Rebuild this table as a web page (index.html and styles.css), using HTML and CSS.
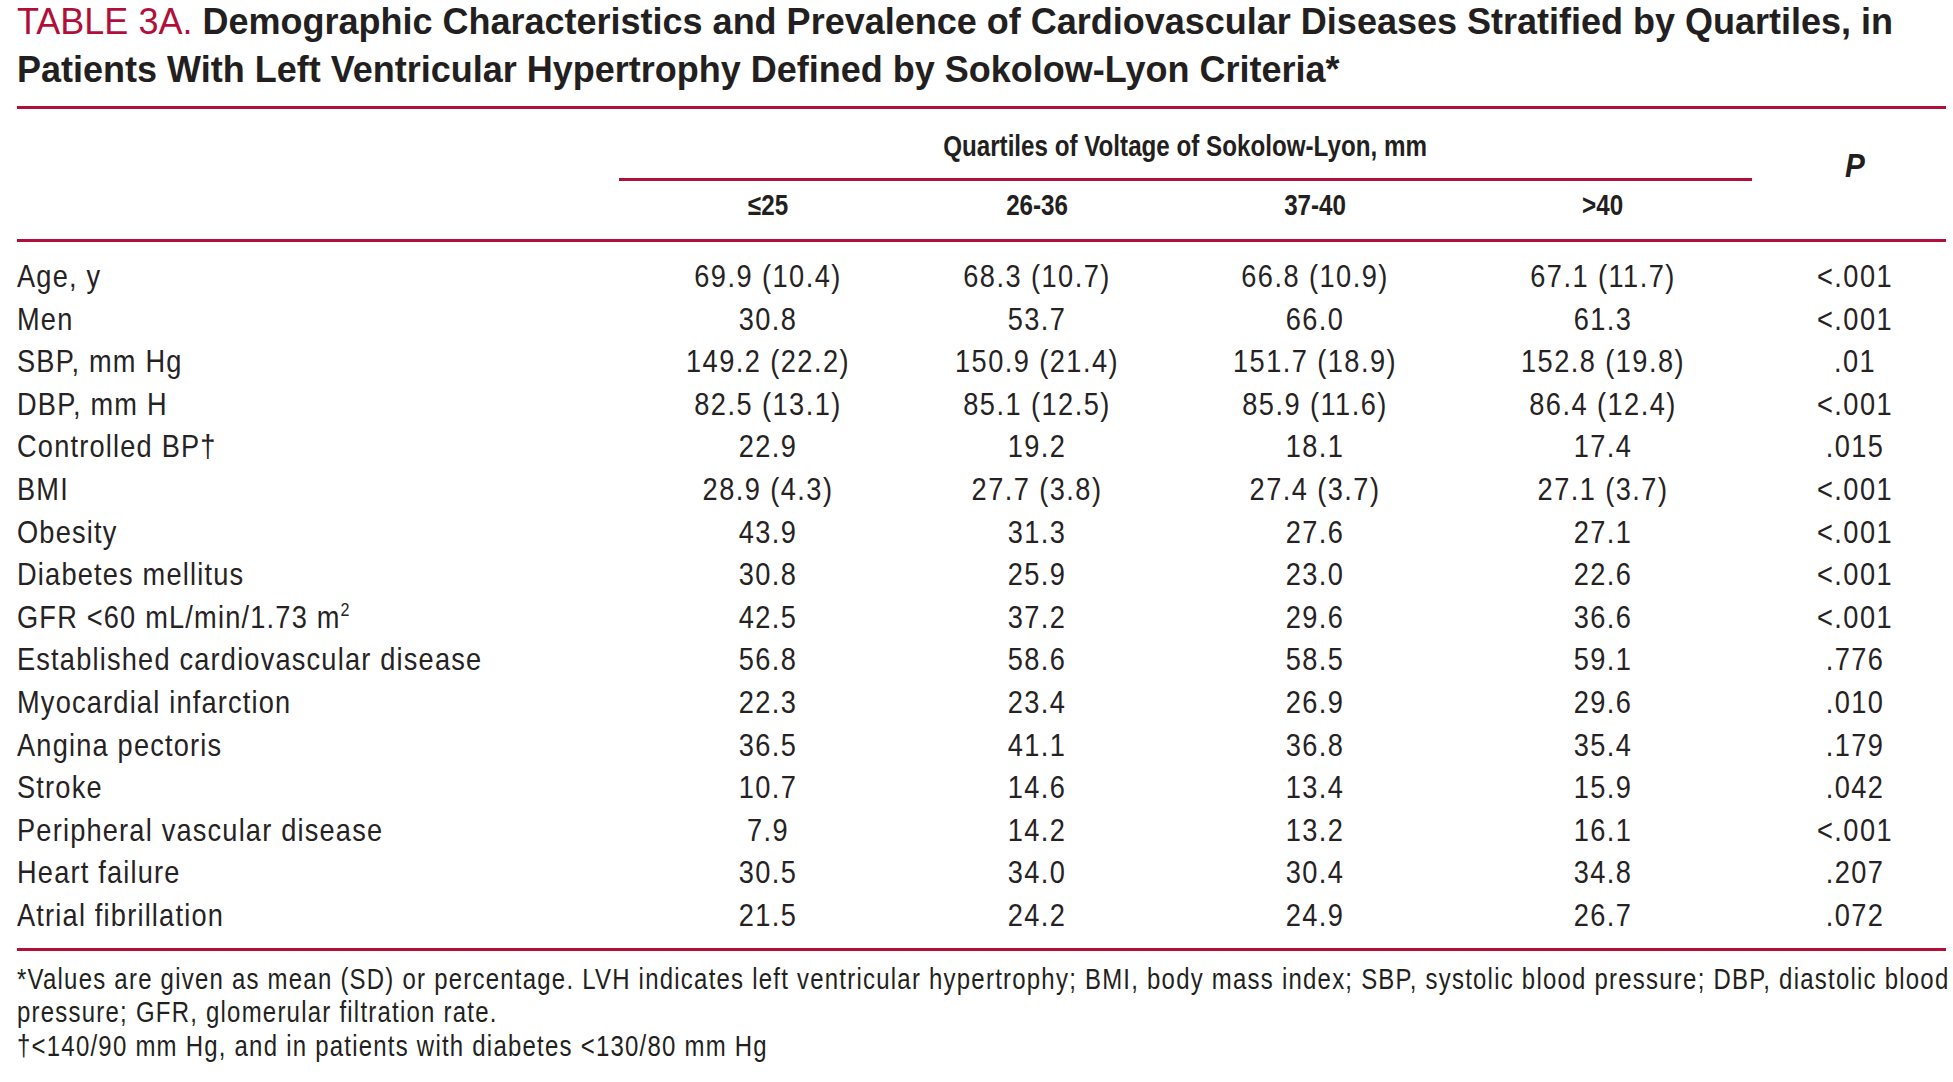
FILE: index.html
```html
<!DOCTYPE html>
<html lang="en">
<head>
<meta charset="utf-8">
<title>Table 3A</title>
<link rel="stylesheet" href="styles.css">
</head>
<body>
<div class="page">
  <h1 class="title"><span class="tlabel">TABLE 3A.</span> Demographic Characteristics and Prevalence of Cardiovascular Diseases Stratified by Quartiles, in<br>Patients With Left Ventricular Hypertrophy Defined by Sokolow-Lyon Criteria*</h1>

  <div class="thead">
    <div class="span-head"><span class="cx">Quartiles of Voltage of Sokolow-Lyon, mm</span></div>
    <div class="p-head"><span class="cx">P</span></div>
    <div class="col-head c1"><span class="cx">&le;25</span></div>
    <div class="col-head c2"><span class="cx">26-36</span></div>
    <div class="col-head c3"><span class="cx">37-40</span></div>
    <div class="col-head c4"><span class="cx">&gt;40</span></div>
  </div>

  <div class="tbody">
    <div class="row"><div class="lbl">Age, y</div><div class="val first">69.9 (10.4)</div><div class="val">68.3 (10.7)</div><div class="val">66.8 (10.9)</div><div class="val">67.1 (11.7)</div><div class="pval">&lt;.001</div></div>
    <div class="row"><div class="lbl">Men</div><div class="val first">30.8</div><div class="val">53.7</div><div class="val">66.0</div><div class="val">61.3</div><div class="pval">&lt;.001</div></div>
    <div class="row"><div class="lbl">SBP, mm Hg</div><div class="val first">149.2 (22.2)</div><div class="val">150.9 (21.4)</div><div class="val">151.7 (18.9)</div><div class="val">152.8 (19.8)</div><div class="pval">.01</div></div>
    <div class="row"><div class="lbl">DBP, mm H</div><div class="val first">82.5 (13.1)</div><div class="val">85.1 (12.5)</div><div class="val">85.9 (11.6)</div><div class="val">86.4 (12.4)</div><div class="pval">&lt;.001</div></div>
    <div class="row"><div class="lbl">Controlled BP&dagger;</div><div class="val first">22.9</div><div class="val">19.2</div><div class="val">18.1</div><div class="val">17.4</div><div class="pval">.015</div></div>
    <div class="row"><div class="lbl">BMI</div><div class="val first">28.9 (4.3)</div><div class="val">27.7 (3.8)</div><div class="val">27.4 (3.7)</div><div class="val">27.1 (3.7)</div><div class="pval">&lt;.001</div></div>
    <div class="row"><div class="lbl">Obesity</div><div class="val first">43.9</div><div class="val">31.3</div><div class="val">27.6</div><div class="val">27.1</div><div class="pval">&lt;.001</div></div>
    <div class="row"><div class="lbl">Diabetes mellitus</div><div class="val first">30.8</div><div class="val">25.9</div><div class="val">23.0</div><div class="val">22.6</div><div class="pval">&lt;.001</div></div>
    <div class="row"><div class="lbl">GFR &lt;60 mL/min/1.73 m<sup>2</sup></div><div class="val first">42.5</div><div class="val">37.2</div><div class="val">29.6</div><div class="val">36.6</div><div class="pval">&lt;.001</div></div>
    <div class="row"><div class="lbl">Established cardiovascular disease</div><div class="val first">56.8</div><div class="val">58.6</div><div class="val">58.5</div><div class="val">59.1</div><div class="pval">.776</div></div>
    <div class="row"><div class="lbl">Myocardial infarction</div><div class="val first">22.3</div><div class="val">23.4</div><div class="val">26.9</div><div class="val">29.6</div><div class="pval">.010</div></div>
    <div class="row"><div class="lbl">Angina pectoris</div><div class="val first">36.5</div><div class="val">41.1</div><div class="val">36.8</div><div class="val">35.4</div><div class="pval">.179</div></div>
    <div class="row"><div class="lbl">Stroke</div><div class="val first">10.7</div><div class="val">14.6</div><div class="val">13.4</div><div class="val">15.9</div><div class="pval">.042</div></div>
    <div class="row"><div class="lbl">Peripheral vascular disease</div><div class="val first">7.9</div><div class="val">14.2</div><div class="val">13.2</div><div class="val">16.1</div><div class="pval">&lt;.001</div></div>
    <div class="row"><div class="lbl">Heart failure</div><div class="val first">30.5</div><div class="val">34.0</div><div class="val">30.4</div><div class="val">34.8</div><div class="pval">.207</div></div>
    <div class="row"><div class="lbl">Atrial fibrillation</div><div class="val first">21.5</div><div class="val">24.2</div><div class="val">24.9</div><div class="val">26.7</div><div class="pval">.072</div></div>
  </div>

  <div class="notes">
    <p>*Values are given as mean (SD) or percentage. LVH indicates left ventricular hypertrophy; BMI, body mass index; SBP, systolic blood pressure; DBP, diastolic blood<br>pressure; GFR, glomerular filtration rate.</p>
    <p>&dagger;&lt;140/90 mm Hg, and in patients with diabetes &lt;130/80 mm Hg</p>
  </div>
</div>
</body>
</html>
```

FILE: styles.css
```css
html, body {
  margin: 0;
  padding: 0;
  background: #ffffff;
}

body {
  color: #231f20;
  font-family: "Liberation Sans", Arial, sans-serif;
  overflow: hidden;
}

.page {
  width: 1929px;
  padding-left: 17px;
}

.title {
  margin: -2px 0 0 0;
  font-size: 36px;
  line-height: 48px;
  font-weight: bold;
  color: #231f20;
  height: 96px;
  white-space: nowrap;
}

.tlabel {
  color: #b10f3a;
  font-weight: normal;
}

/* header */
.thead {
  margin-top: 12px;
  display: grid;
  grid-template-columns: 602px 279px 278px 278px 298px 1fr;
  grid-template-rows: 72px 58px;
  border-top: 3px solid #b10f3a;
  border-bottom: 3px solid #b10f3a;
  font-weight: bold;
  font-size: 29px;
}

.cx {
  display: inline-block;
  white-space: nowrap;
  transform: scaleX(0.834);
}

.span-head {
  grid-column: 2 / 6;
  grid-row: 1;
  border-bottom: 3px solid #b10f3a;
  box-sizing: border-box;
  display: flex;
  align-items: center;
  justify-content: center;
  padding-top: 6px;
}

.p-head {
  grid-column: 6;
  grid-row: 1 / 3;
  display: flex;
  align-items: center;
  justify-content: center;
  font-style: italic;
  font-size: 33px;
  padding-left: 12px;
  padding-bottom: 16px;
}

.p-head .cx {
  transform: scaleX(0.9);
}

.col-head {
  grid-row: 2;
  display: flex;
  align-items: center;
  justify-content: center;
  padding-bottom: 10px;
}

.col-head.c1 { grid-column: 2; padding-left: 19px; }
.col-head.c2 { grid-column: 3; }
.col-head.c3 { grid-column: 4; }
.col-head.c4 { grid-column: 5; }

/* body */
.tbody {
  padding: 13px 0 11px 0;
  border-bottom: 3px solid #b10f3a;
}

.row {
  display: grid;
  grid-template-columns: 602px 279px 278px 278px 298px 1fr;
  height: 42.6px;
  line-height: 42.6px;
  font-size: 32px;
  letter-spacing: 1.7px;
  color: #262223;
}

.lbl {
  white-space: nowrap;
  letter-spacing: 1.4px;
  transform: scaleX(0.85);
  transform-origin: 0 50%;
}

.lbl sup {
  font-size: 19px;
  line-height: 0;
  vertical-align: 12px;
}

.val, .pval {
  text-align: center;
  white-space: nowrap;
  transform: scaleX(0.85);
}

.val.first {
  padding-left: 19px;
  transform-origin: calc(50% + 9.5px) 50%;
}

.pval {
  padding-left: 12px;
  transform-origin: calc(50% + 6px) 50%;
}

/* notes */
.notes {
  margin-top: 12px;
  font-size: 29px;
  line-height: 33.5px;
  letter-spacing: 1.5px;
}

.notes p {
  margin: 0;
  white-space: nowrap;
  transform: scaleX(0.826);
  transform-origin: 0 50%;
}
```
